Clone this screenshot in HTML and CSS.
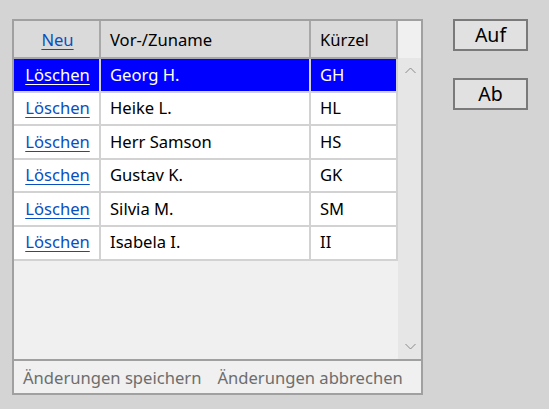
FILE: index.html
```html
<!DOCTYPE html>
<html lang="de">
<head>
<meta charset="utf-8">
<title>Personen</title>
<link rel="stylesheet" href="styles.css">
</head>
<body>
<div class="page">
  <div class="grid">
    <div class="main">
      <div class="table">
        <div class="row head">
          <div class="cell c1"><a href="#">Neu</a></div>
          <div class="cell c2">Vor-/Zuname</div>
          <div class="cell c3">Kürzel</div>
        </div>
        <div class="row sel">
          <div class="cell c1"><a href="#">Löschen</a></div>
          <div class="cell c2">Georg H.</div>
          <div class="cell c3">GH</div>
        </div>
        <div class="row">
          <div class="cell c1"><a href="#">Löschen</a></div>
          <div class="cell c2">Heike L.</div>
          <div class="cell c3">HL</div>
        </div>
        <div class="row">
          <div class="cell c1"><a href="#">Löschen</a></div>
          <div class="cell c2">Herr Samson</div>
          <div class="cell c3">HS</div>
        </div>
        <div class="row">
          <div class="cell c1"><a href="#">Löschen</a></div>
          <div class="cell c2">Gustav K.</div>
          <div class="cell c3">GK</div>
        </div>
        <div class="row">
          <div class="cell c1"><a href="#">Löschen</a></div>
          <div class="cell c2">Silvia M.</div>
          <div class="cell c3">SM</div>
        </div>
        <div class="row">
          <div class="cell c1"><a href="#">Löschen</a></div>
          <div class="cell c2">Isabela I.</div>
          <div class="cell c3">II</div>
        </div>
      </div>
      <div class="scroll">
        <div class="scroll-head"></div>
        <div class="track">
          <svg class="chev" width="11" height="7" viewBox="0 0 11 7"><path d="M0.5 6 L5.5 1 L10.5 6" fill="none" stroke="#8a8a8a" stroke-width="1"/></svg>
          <svg class="chev" width="11" height="7" viewBox="0 0 11 7"><path d="M0.5 1 L5.5 6 L10.5 1" fill="none" stroke="#8a8a8a" stroke-width="1"/></svg>
        </div>
      </div>
    </div>
    <div class="footer">
      <span>Änderungen speichern</span>
      <span>Änderungen abbrechen</span>
    </div>
  </div>
  <div class="buttons">
    <button class="btn">Auf</button>
    <button class="btn">Ab</button>
  </div>
</div>
</body>
</html>
```

FILE: styles.css
```css
html, body {
  margin: 0;
  padding: 0;
  background: #d4d4d4;
}
body {
  font-family: "Noto Sans", "Open Sans", sans-serif;
  font-size: 16.6px;
  color: #000;
}
.page {
  display: flex;
  align-items: flex-start;
  padding: 19px 0 0 12px;
  gap: 30px;
}
.grid {
  width: 411px;
  box-sizing: border-box;
  border: 2px solid #a0a0a0;
  background: #f0f0f0;
  display: flex;
  flex-direction: column;
}
.main {
  display: flex;
  height: 338px;
}
.table {
  width: 384px;
  display: flex;
  flex-direction: column;
}
.row {
  display: flex;
  height: 33.6px;
  box-sizing: border-box;
  border-bottom: 2px solid #d2d2d2;
  background: #fff;
}
.row.head {
  height: 38px;
  background: #dadada;
  border-bottom: 2px solid #a8a8a8;
}
.row.sel {
  background: #0000ff;
  color: #fff;
}
.cell {
  box-sizing: border-box;
  border-right: 2px solid #d2d2d2;
  display: flex;
  align-items: center;
  padding-left: 9px;
  white-space: nowrap;
  line-height: 1;
}
.head .cell {
  border-right-color: #a8a8a8;
  padding-top: 2px;
}
.c1 {
  width: 87px;
  justify-content: center;
  padding-left: 2px;
  padding-right: 0;
}
.c2 { width: 210px; }
.c3 { width: 87px; }
.cell a {
  color: #0a4fc0;
  text-decoration: underline;
  text-underline-offset: 3px;
}
.sel .cell a {
  color: #fff;
}
.scroll {
  width: 23px;
  display: flex;
  flex-direction: column;
}
.scroll-head {
  height: 37px;
  background: #f0f0f0;
}
.track {
  flex: 1;
  background: #e6e6e6;
  display: flex;
  flex-direction: column;
  justify-content: space-between;
  align-items: center;
  padding: 9px 0 9px 1px;
}
.chev {
  display: block;
}
.footer {
  border-top: 2px solid #a0a0a0;
  height: 32px;
  display: flex;
  align-items: center;
  gap: 16px;
  padding-left: 9px;
  color: #6d6d6d;
  white-space: nowrap;
}
.buttons {
  display: flex;
  flex-direction: column;
  gap: 27px;
}
.btn {
  width: 75px;
  height: 32px;
  box-sizing: border-box;
  border: 2px solid #7a7a7a;
  background: #e1e1e1;
  font-family: "Noto Sans", "Open Sans", sans-serif;
  font-size: 19.5px;
  color: #000;
  padding: 0;
  line-height: 1;
}
```
